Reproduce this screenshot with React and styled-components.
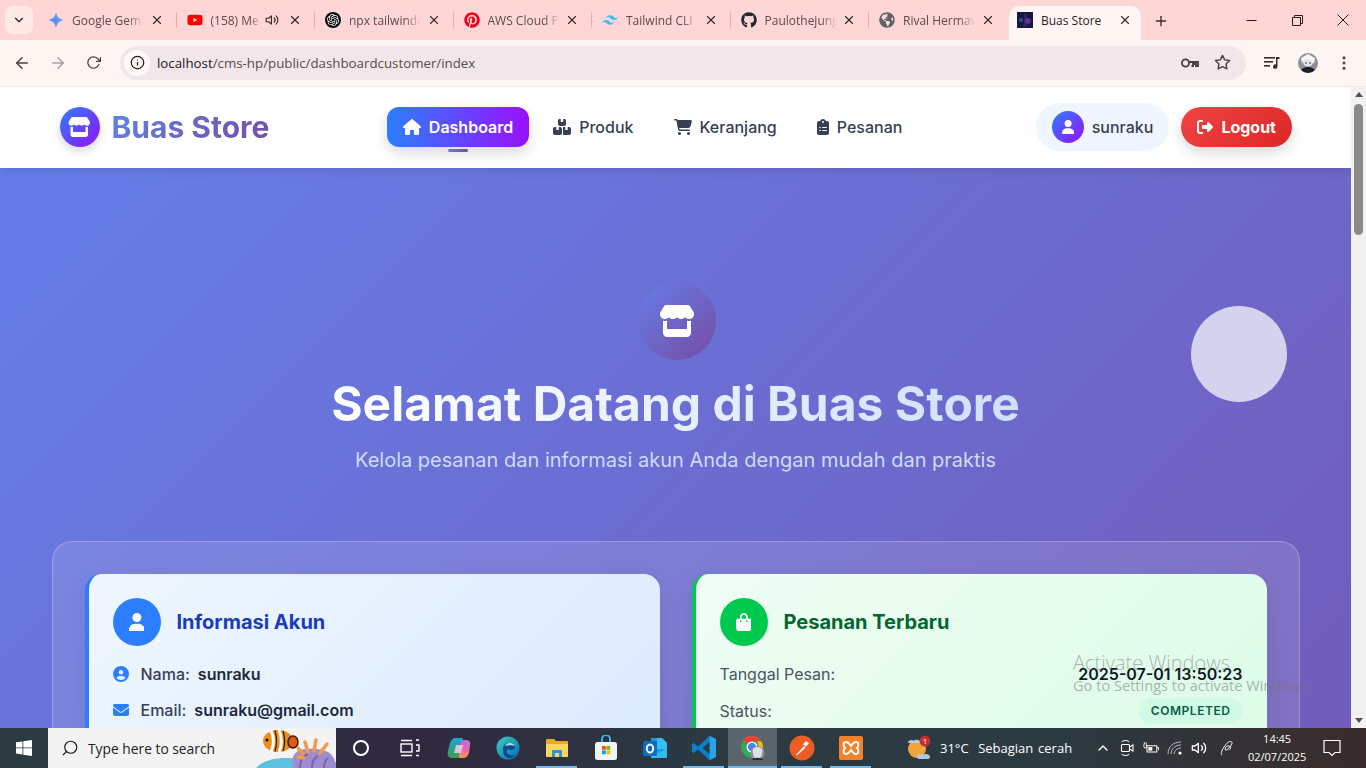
import React from "react";
import styled, { createGlobalStyle } from "styled-components";
import { FaPinterest, FaGithub, FaYoutube, FaGlobeAmericas } from "react-icons/fa";
import {
  FaStore, FaHouse, FaBoxesStacked, FaCartShopping, FaClipboardList, FaUser, FaRightFromBracket,
  FaCircleUser, FaEnvelope, FaBagShopping,
} from "react-icons/fa6";
import { SiOpenai, SiTailwindcss } from "react-icons/si";
import { FiArrowLeft, FiArrowRight, FiRotateCw, FiStar, FiX, FiPlus, FiChevronDown, FiMoreVertical, FiInfo, FiVolume2, FiChevronUp, FiSearch } from "react-icons/fi";

const Global = createGlobalStyle`
  html, body { margin: 0; padding: 0; width: 1366px; height: 768px; overflow: hidden; background: #fff; }
  * { box-sizing: border-box; }
`;

const Screen = styled.div`
  position: relative; width: 1366px; height: 768px; display: flex; flex-direction: column; overflow: hidden;
  font-family: Inter, "Liberation Sans", sans-serif;
`;

/* sizes a Font Awesome glyph to its true aspect ratio */
const Glyph = styled.span`
  display: flex; flex: none;
  svg { width: ${(p) => p.$w}px; height: ${(p) => p.$h || 16}px; }
`;

/* ---------- browser chrome ---------- */
const TabBar = styled.div`
  height: 40px; flex: none; background: #ffd6d6; display: flex; align-items: flex-end; padding-left: 5px;
  font-family: "Open Sans", "Noto Sans", sans-serif; font-size: 12px; color: #554141;
`;
const TabMenu = styled.div`
  width: 28px; height: 28px; margin: 0 5px 6px 0; border-radius: 8px; background: #ffe9e7; display: flex;
  align-items: center; justify-content: center; color: #2a1c1c; font-size: 14px;
`;
const Tab = styled.div`
  position: relative; width: ${(p) => (p.$active ? "132px" : "138.5px")}; height: ${(p) => (p.$active ? "34px" : "40px")};
  margin-left: ${(p) => (p.$active ? "1.5px" : "0")}; padding: ${(p) => (p.$active ? "0 0 6px 8px" : "0 0 0 10px")};
  display: flex; align-items: center; gap: 8px; flex: none; border-radius: 10px 10px 0 0;
  background: ${(p) => (p.$active ? "#fff5f3" : "transparent")}; color: ${(p) => (p.$active ? "#2b1c1c" : "#5e4a4a")};
  &::after {
    content: ""; display: ${(p) => (p.$sep ? "block" : "none")}; position: absolute; right: 0; top: 12px; width: 1px; height: 16px; background: #f7a9a9;
  }
`;
const Fav = styled.span`width: 16px; height: 16px; flex: none; display: flex; align-items: center; justify-content: center; font-size: 16px; color: ${(p) => p.$c || "#444"};`;
const OpenAiFav = styled.span`width: 16px; height: 16px; border-radius: 50%; background: #0b0b0b; color: #fff; display: flex; align-items: center; justify-content: center; font-size: 12px;`;
const TabTitle = styled.span`
  flex: none; width: ${(p) => p.$w || 72}px; overflow: hidden; white-space: nowrap;
  -webkit-mask-image: ${(p) => (p.$plain ? "none" : "linear-gradient(90deg, #000 78%, transparent)")};
  mask-image: ${(p) => (p.$plain ? "none" : "linear-gradient(90deg, #000 78%, transparent)")};
`;
const TabClose = styled.span`position: absolute; right: ${(p) => (p.$active ? "9px" : "13px")}; top: ${(p) => (p.$active ? "14px" : "20px")}; transform: translateY(-50%); display: flex; font-size: 14px; color: #3a2a2a;`;
const Speaker = styled.span`position: absolute; right: 36px; top: 50%; transform: translateY(-50%); display: flex; font-size: 14px; color: #3a2a2a;`;
const NewTab = styled.span`margin: 0 0 11px 12px; display: flex; font-size: 16px; color: #3a2a2a;`;
const WinControls = styled.div`margin-left: auto; display: flex; height: 40px;`;
const WinBtn = styled.span`width: 46px; height: 40px; display: flex; align-items: center; justify-content: center; color: #2a1c1c;`;

const Toolbar = styled.div`
  height: 47px; flex: none; background: #fff5f3; border-bottom: 1px solid #fbe4e2; display: flex; align-items: center;
  padding: 0 0 1px 4px; color: #4f3d3d; font-family: "Open Sans", "Noto Sans", sans-serif;
`;
const ToolBtn = styled.span`
  width: 36px; height: 34px; flex: none; display: flex; align-items: center; justify-content: center; font-size: 18px;
  color: ${(p) => (p.$off ? "#ab9c9c" : "#4f3d3d")};
`;
const ReloadGlyph = styled(FiRotateCw)`font-size: 15px; margin-left: -1px;`;
const Address = styled.div`
  width: 1126px; height: 34px; margin-left: 8px; flex: none; border-radius: 17px; background: #f1e6e9; display: flex; align-items: center; padding: 0 15px 0 4px;
`;
const InfoBubble = styled.span`width: 26px; height: 26px; border-radius: 50%; background: #fff8f7; display: flex; align-items: center; justify-content: center; font-size: 15px; color: #2b1c1c;`;
const Url = styled.span`margin-left: 7px; font-size: 13.3px; color: #5b4b4e; white-space: nowrap; b { font-weight: 400; color: #22181a; }`;
const AddrEnd = styled.span`margin-left: auto; display: flex; align-items: center; gap: 14px; font-size: 17px; color: #4f3d3d;`;
const ToolEnd = styled.div`margin-left: 8px; display: flex; align-items: center;`;

/* ---------- page ---------- */
const Viewport = styled.div`flex: 1; min-height: 0; display: flex; overflow: hidden;`;
const Page = styled.div`flex: 1; min-width: 0; display: flex; flex-direction: column; overflow: hidden;`;
const Nav = styled.nav`
  position: relative; z-index: 2; height: 81px; flex: none; background: #fff; box-shadow: 0 2px 10px rgba(0,0,0,.12);
`;
const NavInner = styled.div`max-width: 1280px; height: 80px; margin: 0 auto; padding: 0 23.5px 0 24px; display: flex; align-items: center; justify-content: space-between;`;
const Brand = styled.div`display: flex; align-items: center; gap: 12px;`;
const BrandIcon = styled.span`
  width: 40px; height: 40px; border-radius: 50%; background: linear-gradient(135deg, #2b7fff, #9810fa); display: flex; align-items: center; justify-content: center;
  color: #fff; box-shadow: 0 4px 10px rgba(0,0,0,.16);
`;
const BrandText = styled.span`
  font-size: 30px; font-weight: 700; line-height: 36px;
  background: linear-gradient(135deg, #5f85e8, #764ba2); -webkit-background-clip: text; background-clip: text; color: transparent;
`;
const NavLinks = styled.div`display: flex; gap: 8px;`;
const NavLink = styled.a`
  position: relative; height: 40px; padding: 0 16px; display: flex; align-items: center; gap: 8px; border-radius: 12px; font-size: 16px; font-weight: ${(p) => (p.$active ? 600 : 500)};
  color: ${(p) => (p.$active ? "#fff" : "#364153")};
  background: ${(p) => (p.$active ? "linear-gradient(90deg, #2b7fff, #9810fa)" : "transparent")};
  box-shadow: ${(p) => (p.$active ? "0 6px 14px rgba(0,0,0,.14)" : "none")};
  ${(p) => p.$active && `&::after { content: ""; position: absolute; left: 50%; bottom: -5px; width: 20px; height: 3px; margin-left: -10px; border-radius: 2px; background: linear-gradient(90deg, #667eea, #764ba2); }`}
`;
const NavRight = styled.div`display: flex; align-items: center; gap: 12px;`;
const UserPill = styled.div`height: 48px; padding: 0 16px; border-radius: 24px; background: #eff6ff; display: flex; align-items: center; gap: 8px; font-size: 16px; font-weight: 500; color: #364153;`;
const Avatar = styled.span`width: 32px; height: 32px; border-radius: 50%; background: linear-gradient(135deg, #2b7fff, #9810fa); color: #fff; display: flex; align-items: center; justify-content: center;`;
const LogoutBtn = styled.button`
  height: 40px; padding: 0 16px; border: 0; border-radius: 20px; background: linear-gradient(135deg, #ef4444, #dc2626); color: #fff; font: 700 16px Inter, sans-serif; display: flex; align-items: center; gap: 8px;
  box-shadow: 0 6px 14px rgba(0,0,0,.14);
`;

const Hero = styled.main`
  position: relative; flex: 1; min-height: 0; overflow: hidden; background: linear-gradient(135deg, #667eea 0%, #764ba2 150%);
  display: flex; flex-direction: column; align-items: center; padding-top: 114px;
`;
const Bubble = styled.div`position: absolute; left: 1191px; top: 138px; width: 96px; height: 96px; border-radius: 50%; background: #d4d3ee;`;
const HeroIcon = styled.div`
  width: 78px; height: 78px; flex: none; border-radius: 50%; background: linear-gradient(135deg, #667eea, #764ba2); color: #fff; display: flex; align-items: center; justify-content: center; margin-left: 3px;
`;
const HeroTitle = styled.h1`
  margin: 14px 0 0; flex: none; font-size: 48px; line-height: 60px; font-weight: 700; letter-spacing: 0;
  background: linear-gradient(90deg, #ffffff, #cfe0fe); -webkit-background-clip: text; background-clip: text; color: transparent;
`;
const HeroSub = styled.p`margin: 12px 0 0; flex: none; font-size: 20px; line-height: 28px; color: #cfdbfb;`;
const Panel = styled.section`
  width: 1248px; flex: none; margin-top: 67px; padding: 32px; border: 1px solid rgba(255,255,255,.22); border-radius: 20px; background: rgba(255,255,255,.12);
  display: grid; grid-template-columns: 1fr 1fr; gap: 32px;
`;
const Card = styled.article`
  border-left: 4px solid ${(p) => p.$c}; border-radius: 16px; padding: 24px; background: ${(p) => p.$bg};
  box-shadow: 0 8px 24px rgba(0,0,0,.08);
`;
const CardHead = styled.div`display: flex; align-items: center; gap: 16px; margin-bottom: 16px;`;
const CardIcon = styled.span`width: 48px; height: 48px; border-radius: 50%; background: ${(p) => p.$c}; color: #fff; display: flex; align-items: center; justify-content: center;`;
const CardTitle = styled.h2`margin: 0; font-size: 20px; line-height: 28px; font-weight: 700; color: ${(p) => p.$c};`;
const Rows = styled.div`display: flex; flex-direction: column; gap: 12px;`;
const InfoRow = styled.div`display: flex; align-items: center; height: 24px; font-size: 16px; svg { color: #2b7fff; font-size: 16px; margin-right: 12px; }`;
const Label = styled.span`color: #364153; font-weight: 500; margin-right: 8px;`;
const Value = styled.span`font-weight: 600; color: ${(p) => p.$c || "#1e2939"};`;
const SplitRow = styled.div`display: flex; align-items: center; justify-content: space-between; font-size: 16px; line-height: 24px;`;
const Muted = styled.span`color: #4a5565;`;
const Badge = styled.span`height: 26px; padding: 0 12px; border-radius: 13px; background: #d1fae5; color: #065f46; font-size: 12px; font-weight: 600; letter-spacing: .55px; display: flex; align-items: center;`;

const Scrollbar = styled.div`width: 15px; flex: none; background: #f1f1f1; position: relative; display: flex; flex-direction: column; align-items: center; justify-content: space-between; padding: 5px 0 5px;`;
const Thumb = styled.div`position: absolute; left: 3px; top: 17px; width: 9px; height: 131px; border-radius: 5px; background: #8a8a8a;`;
const Arrow = styled.span`width: 0; height: 0; border-left: 4.5px solid transparent; border-right: 4.5px solid transparent; ${(p) => (p.$down ? "border-top: 5px solid #505050;" : "border-bottom: 5px solid #505050;")}`;

const Activate = styled.div`
  position: absolute; left: 1073px; top: 650px; color: rgba(115,115,115,.55); font-family: "Open Sans", "Noto Sans", sans-serif; pointer-events: none; white-space: nowrap;
`;
const ActivateMain = styled.div`font-size: 20px; line-height: 25px; font-weight: 300;`;
const ActivateSub = styled.div`font-size: 14.6px; line-height: 20px; font-weight: 400;`;

/* ---------- taskbar ---------- */
const Taskbar = styled.footer`
  height: 40px; flex: none; display: flex; align-items: stretch; color: #fff; font-family: "Open Sans", "Noto Sans", sans-serif;
  background: linear-gradient(90deg, #2a3b42 0%, #2c3a42 3%, #31283f 30%, #2b3a42 52%, #2c3a41 78%, #3a2b2c 100%);
`;
const StartBtn = styled.div`width: 48px; flex: none; display: flex; align-items: center; justify-content: center;`;
const SearchBox = styled.div`
  position: relative; width: 288px; flex: none; background: #f3f3f3; display: flex; align-items: center; padding-left: 13px; gap: 9px; color: #222; font-size: 13.8px; overflow: hidden;
  svg.lens { font-size: 18px; transform: scaleX(-1); stroke-width: 1.6; }
`;
const SearchArt = styled.svg`position: absolute; right: 0; top: 0;`;
const TaskItem = styled.div`
  position: relative; width: 49px; flex: none; display: flex; align-items: center; justify-content: center;
  background: ${(p) => (p.$on ? "rgba(255,255,255,.22)" : "transparent")};
  ${(p) => p.$run && `&::after { content: ""; position: absolute; left: ${p.$on ? 0 : 4}px; right: ${p.$on ? 0 : 4}px; bottom: 0; height: 2px; background: #76b9ed; }`}
`;
const Weather = styled.div`margin-left: 32px; display: flex; align-items: center; gap: 7px; font-size: 13px; white-space: nowrap; word-spacing: 1.4px;`;
const Tray = styled.div`margin-left: 23px; display: flex; align-items: center; gap: 8px; font-size: 16px;`;
const TrayIcon = styled.span`width: 16px; display: flex; justify-content: center; margin-left: ${(p) => p.$gap || 0}px;`;
const Clock = styled.div`margin-left: 7px; width: 70px; text-align: center; font-size: 11px; line-height: 18px; display: flex; flex-direction: column; justify-content: center;`;
const Notify = styled.div`width: 40px; display: flex; align-items: center; justify-content: center;`;

const GeminiIcon = () => (
  <svg width="16" height="16" viewBox="0 0 16 16"><defs><linearGradient id="gm" x1="0" y1="1" x2="1" y2="0"><stop offset="0" stopColor="#3f7df0" /><stop offset="1" stopColor="#7aa7f7" /></linearGradient></defs><path d="M8 0c.6 4.4 3.2 7.3 8 8-4.8.7-7.4 3.6-8 8-.6-4.4-3.2-7.3-8-8 4.8-.7 7.4-3.6 8-8z" fill="url(#gm)" /></svg>
);
const StoreFav = () => (
  <svg width="16" height="16" viewBox="0 0 16 16"><rect width="16" height="16" fill="#141a3c" /><path d="M7 2h3l1 7-1 6H6l1-6z" fill="#262a60" /><circle cx="11" cy="9" r="3" fill="#7c2da8" opacity=".8" /><circle cx="4" cy="8" r="2" fill="#2c4fa8" /></svg>
);
const KeyIcon = () => (
  <svg width="20" height="14" viewBox="0 0 20 14" fill="none" stroke="#4f3d3d" strokeWidth="1.8"><circle cx="5.5" cy="7" r="3.6" /><path d="M9 6h9v4h-2V8h-3v2h-1.500" /></svg>
);
const MediaIcon = () => (
  <svg width="16" height="14" viewBox="0 0 16 14" fill="#3a2a2a"><rect x="0" y="1" width="11" height="1.600" /><rect x="0" y="5" width="9" height="1.600" /><rect x="0" y="9" width="6" height="1.600" /><path d="M12 1h3.500v2H13.500v7.500a2.200 2.200 0 1 1-1.500-2z" /></svg>
);
const ProfilePic = () => (
  <svg width="20" height="20" viewBox="0 0 20 20" style={{ borderRadius: "50%" }}><rect width="20" height="20" fill="#8d8e98" /><circle cx="10" cy="8" r="5.500" fill="#e4e2e6" /><path d="M2 20c1-8 15-8 16 0z" fill="#1e1e28" /><path d="M4 11c0-6 9-7 12 0l1-6-7-4-7 4z" fill="#f6f5f8" /><circle cx="8" cy="10" r=".8" fill="#334" /><circle cx="12" cy="10" r=".8" fill="#334" /></svg>
);
const WinLogo = () => (
  <svg width="16" height="16" viewBox="0 0 16 16" fill="#fff"><path d="M0 2.300 6.500 1.400V7.500H0zM7.300 1.300 16 0v7.500H7.300zM0 8.300h6.500v6.200L0 13.600zM7.300 8.300H16V16l-8.700-1.200z" /></svg>
);
const FishArt = () => (
  <SearchArt width="80" height="40" viewBox="0 0 80 40">
    <path d="M0 40c8-9 24-12 44-9l36 3v6z" fill="#5dc0dc" />
    <g transform="translate(4 1)">
      <ellipse cx="18" cy="12" rx="15" ry="11" fill="#f08a18" />
      <path d="M11 2c3 6 3 14 0 21M19 1c3 7 3 16 0 22" stroke="#fff" strokeWidth="3" fill="none" />
      <path d="M15 1.500c2 7 2 14 0 21M23 2c2 6 2 14 0 20" stroke="#222" strokeWidth="1.200" fill="none" />
      <ellipse cx="33" cy="13" rx="5" ry="6" fill="#d95c10" stroke="#3b1c08" strokeWidth="1.500" />
      <circle cx="7" cy="11" r="1.500" fill="#111" />
    </g>
    <path d="M38 40c-3-7-2-13 4-17 6-3 22-3 30 1 6 4 8 10 8 16z" fill="#9f8bd0" />
    <path d="M44 40c0-7 3-12 8-14M56 40c0-6 2-10 6-12M68 40c0-5 1-8 4-10" stroke="#7c63ad" strokeWidth="2" fill="none" />
    <path d="M47 26l-5-6M52 24l-3-10M58 23l2-11M64 25l7-9M48 30l-6-1" stroke="#f2994a" strokeWidth="3.500" strokeLinecap="round" />
  </SearchArt>
);
const CortanaIcon = () => (<svg width="18" height="18" viewBox="0 0 18 18"><circle cx="9" cy="9" r="7" fill="none" stroke="#fff" strokeWidth="2" /></svg>);
const TaskView = () => (<svg width="20" height="18" viewBox="0 0 20 18" fill="none" stroke="#fff" strokeWidth="1.400"><rect x="1" y="5" width="11" height="8" /><path d="M1 1.500h11M1 16.500h11M16 1h3M16 6h3v6h-3M16 16.500h3" /></svg>);
const CopilotIcon = () => (
  <svg width="24" height="24" viewBox="0 0 24 24"><defs><linearGradient id="cpa" x1="0" y1="0" x2="0" y2="1"><stop offset="0" stopColor="#1fa2d8" /><stop offset="1" stopColor="#3f9a50" /></linearGradient><linearGradient id="cpb" x1="0" y1="0" x2="0" y2="1"><stop offset="0" stopColor="#b46be0" /><stop offset=".6" stopColor="#ee6aa8" /><stop offset="1" stopColor="#f2a03a" /></linearGradient></defs><path d="M8 2h8l-4 20H5c-4 0-5-3-4-7l2-8c1-3 3-5 5-5z" fill="url(#cpa)" /><path d="M12 22h4c3 0 5-2 6-5l1-8c1-3-1-5-4-5h-4l-3 10z" fill="url(#cpb)" /><path d="M9 9h7l-2 8H7z" fill="#f3d6ee" opacity=".8" /></svg>
);
const EdgeIcon = () => (
  <svg width="24" height="24" viewBox="0 0 24 24"><defs><linearGradient id="ed" x1="0" y1="0" x2="1" y2="1"><stop offset="0" stopColor="#3bd1c0" /><stop offset="1" stopColor="#0c63b6" /></linearGradient></defs><circle cx="12" cy="12" r="11.500" fill="url(#ed)" /><path d="M7 13c0-4 3-6 7-6 3 0 5 2 5 4 0 2-2 3-5 3-1 0-1-1-1-1-2 0-3 2-2 4 1 2 4 3 8 2-2 3-6 4-9 2-2-1-3-4-3-8z" fill="#0a3f86" opacity=".9" /><path d="M9 10c1-2 3-3 5-3 2 0 4 1 5 3-2-1-6-1-10 0z" fill="#9ff0c8" /></svg>
);
const ExplorerIcon = () => (
  <svg width="24" height="22" viewBox="0 0 24 22"><path d="M1 3a1 1 0 0 1 1-1h7l2 2h11a1 1 0 0 1 1 1v14a1 1 0 0 1-1 1H2a1 1 0 0 1-1-1z" fill="#e9a825" /><path d="M1 7h22v12a1 1 0 0 1-1 1H2a1 1 0 0 1-1-1z" fill="#fbd561" /><path d="M7 20v-6a1 1 0 0 1 1-1h8a1 1 0 0 1 1 1v6h-3v-4h-4v4z" fill="#2a94dc" /></svg>
);
const StoreIcon = () => (
  <svg width="24" height="26" viewBox="0 0 24 26"><path d="M8 8V4a4 4 0 0 1 8 0v4" fill="none" stroke="#36b3f0" strokeWidth="2" /><rect x="1" y="7" width="22" height="18" rx="2.500" fill="#f4f4f4" /><rect x="8" y="11" width="3.800" height="3.800" fill="#f25022" /><rect x="12.400" y="11" width="3.800" height="3.800" fill="#7fba00" /><rect x="8" y="15.400" width="3.800" height="3.800" fill="#00a4ef" /><rect x="12.400" y="15.400" width="3.800" height="3.800" fill="#ffb900" /></svg>
);
const OutlookIcon = () => (
  <svg width="26" height="26" viewBox="0 0 26 26"><path d="M9 3h11l5 5v12a2 2 0 0 1-2 2H9z" fill="#1c9ad6" /><path d="M15 3h5l5 5v6h-10z" fill="#35c1ef" /><path d="M9 13l8 5 8-5v9a1 1 0 0 1-1 1H9z" fill="#2fbce8" /><rect x="1" y="6" width="14" height="15" rx="1.500" fill="#0f6cbd" /><ellipse cx="8" cy="13.500" rx="3.200" ry="4" fill="none" stroke="#fff" strokeWidth="1.800" /></svg>
);
const VsCodeIcon = () => (
  <svg width="26" height="26" viewBox="0 0 26 26"><path d="M18.500 1 25 4v18l-6.500 3L7 14.500 2.500 18 1 17V9l1.500-1L7 11.500z" fill="#0a7fcc" /><path d="M18.500 1 25 4v18l-6.500 3z" fill="#28a4ea" /><path d="M18.500 7l-7 6 7 6z" fill="#2c3a42" /></svg>
);
const ChromeIcon = () => (
  <svg width="26" height="26" viewBox="0 0 26 26"><circle cx="12" cy="12" r="11" fill="#34a853" /><path d="M12 1a11 11 0 0 1 9.500 5.500H12a5.500 5.500 0 0 0-5 3L3 4.500A11 11 0 0 1 12 1z" fill="#ea4335" /><path d="M21.500 6.500A11 11 0 0 1 12 23l4.700-8.200a5.500 5.500 0 0 0 0-8.300z" fill="#fbbc05" /><circle cx="12" cy="12" r="5.500" fill="#fff" /><circle cx="12" cy="12" r="4.200" fill="#4285f4" /><circle cx="17.500" cy="18" r="7" fill="#8f8f98" /><path d="M12.500 15c2-4 8-4 10 0l-1 6c-2 3-7 3-8 0z" fill="#e0dfe4" /><path d="M11.500 25c1-3 10-3 12 0z" fill="#2c2c36" /></svg>
);
const PostmanIcon = () => (
  <svg width="26" height="26" viewBox="0 0 26 26"><circle cx="13" cy="13" r="12.500" fill="#ef5b25" /><path d="M7 20l8-9 1.500 1.500-8.500 8z" fill="#fff" /><path d="M14 9.500l3-3.500 3 2-3 3.500z" fill="#fff" /></svg>
);
const XamppIcon = () => (
  <svg width="26" height="26" viewBox="0 0 26 26"><rect x="1" y="1" width="24" height="24" rx="2" fill="#f4812a" /><path d="M8 7c2 0 3 1 5 4 2-3 3-4 5-4 3 0 3 4 1 6 2 2 2 6-1 6-2 0-3-1-5-4-2 3-3 4-5 4-3 0-3-4-1-6-2-2-2-6 1-6z" fill="none" stroke="#fff" strokeWidth="2" /></svg>
);
const WeatherIcon = () => (
  <svg width="26" height="26" viewBox="0 0 26 26"><circle cx="10" cy="14" r="9" fill="#f2a33a" /><path d="M1 8c0-3 4-4 6-2 1-2 6-2 6 2z" fill="#b6cde4" /><path d="M10 22c0-3 4-4 6-2 2-2 7-1 7 2 0 1-1 2-2 2H12c-1 0-2-1-2-2z" fill="#a9c8e8" /><circle cx="18" cy="6" r="5.500" fill="#c62f2f" /><text x="18" y="9" fontSize="8" textAnchor="middle" fill="#fff" fontFamily="Open Sans, sans-serif">1</text></svg>
);
const MeetIcon = () => (<svg width="16" height="18" viewBox="0 0 16 18" fill="none" stroke="#fff" strokeWidth="1.100"><rect x="2.500" y="5.500" width="8" height="7" rx="1" /><path d="M10.500 8l3.500-2v6l-3.500-2M3 3c1-2 6-2 7 0M3 15c1 2 6 2 7 0" /></svg>);
const BatteryIcon = () => (<svg width="18" height="16" viewBox="0 0 18 16" fill="none" stroke="#fff" strokeWidth="1.100"><rect x="4.500" y="5.500" width="11" height="7" /><rect x="6" y="7" width="4.500" height="4" fill="#fff" stroke="none" /><path d="M15.500 7.500h2v3M1 4v2.500a1.500 1.500 0 0 0 3 0V4M1.500 1.500V4M3.500 1.500V4" /></svg>);
const WifiIcon = () => (<svg width="16" height="16" viewBox="0 0 16 16" fill="none" stroke="#b9c0c4" strokeWidth="1"><path d="M1 14C1 7 6 2 14 2M4 14c0-5 4-9 10-9M7 14c0-3 3-6 7-6" /><circle cx="13" cy="13" r="1.600" fill="#fff" stroke="none" /></svg>);
const PenIcon = () => (<svg width="18" height="20" viewBox="0 0 18 20" fill="none" stroke="#fff" strokeWidth="1.100"><path d="M3 18c-1-2 0-6 4-11 2-3 5-5 7-4 2 2-1 5-4 8-2 2-3 2-3 0 0-3 3-4 5-3 2 1 1 4-1 4" /></svg>);
const NotifyIcon = () => (<svg width="20" height="20" viewBox="0 0 20 20" fill="none" stroke="#fff" strokeWidth="1.200"><path d="M2 2.500h16v12h-5l-3 3-3-3H2z" /></svg>);

const tabs = [
  { icon: <GeminiIcon />, title: "Google Gemini" },
  { icon: <FaYoutube />, c: "#f00", title: "(158) Me", w: 50, speaker: true },
  { icon: <OpenAiFav><SiOpenai /></OpenAiFav>, title: "npx tailwindcss" },
  { icon: <FaPinterest />, c: "#e60023", title: "AWS Cloud Pra" },
  { icon: <SiTailwindcss />, c: "#38bdf8", title: "Tailwind CLI - " },
  { icon: <FaGithub />, c: "#24292f", title: "Paulothejungle" },
  { icon: <FaGlobeAmericas />, c: "#5f6368", title: "Rival Hermawan" },
];

export default function App() {
  return (
    <Screen>
      <Global />
      <TabBar>
        <TabMenu><FiChevronDown /></TabMenu>
        {tabs.map((t, i) => (
          <Tab key={t.title} $sep={i < 6}>
            <Fav $c={t.c}>{t.icon}</Fav>
            <TabTitle $w={t.w}>{t.title}</TabTitle>
            {t.speaker && <Speaker><FiVolume2 /></Speaker>}
            <TabClose><FiX /></TabClose>
          </Tab>
        ))}
        <Tab $active>
          <Fav><StoreFav /></Fav>
          <TabTitle $plain>Buas Store</TabTitle>
          <TabClose $active><FiX /></TabClose>
        </Tab>
        <NewTab><FiPlus /></NewTab>
        <WinControls>
          <WinBtn><svg width="11" height="11" viewBox="0 0 11 11" stroke="#2a1c1c"><path d="M0.500 5.500h10" /></svg></WinBtn>
          <WinBtn><svg width="11" height="11" viewBox="0 0 11 11" fill="none" stroke="#2a1c1c"><path d="M0.500 2.500h8v8h-8zM2.500 2.500v-2h8v8h-2" /></svg></WinBtn>
          <WinBtn><svg width="12" height="12" viewBox="0 0 12 12" stroke="#2a1c1c"><path d="M0.500 0.500l11 11M11.500 0.500l-11 11" /></svg></WinBtn>
        </WinControls>
      </TabBar>
      <Toolbar>
        <ToolBtn><FiArrowLeft /></ToolBtn>
        <ToolBtn $off><FiArrowRight /></ToolBtn>
        <ToolBtn><ReloadGlyph /></ToolBtn>
        <Address>
          <InfoBubble><FiInfo /></InfoBubble>
          <Url><b>localhost</b>/cms-hp/public/dashboardcustomer/index</Url>
          <AddrEnd><KeyIcon /><FiStar /></AddrEnd>
        </Address>
        <ToolEnd>
          <ToolBtn><MediaIcon /></ToolBtn>
          <ToolBtn><ProfilePic /></ToolBtn>
          <ToolBtn><FiMoreVertical /></ToolBtn>
        </ToolEnd>
      </Toolbar>
      <Viewport>
        <Page>
          <Nav>
            <NavInner>
              <Brand>
                <BrandIcon><Glyph $w={22.5} $h={20}><FaStore /></Glyph></BrandIcon>
                <BrandText>Buas Store</BrandText>
              </Brand>
              <NavLinks>
                <NavLink $active><Glyph $w={18}><FaHouse /></Glyph>Dashboard</NavLink>
                <NavLink><Glyph $w={18}><FaBoxesStacked /></Glyph>Produk</NavLink>
                <NavLink><Glyph $w={18}><FaCartShopping /></Glyph>Keranjang</NavLink>
                <NavLink><Glyph $w={12}><FaClipboardList /></Glyph>Pesanan</NavLink>
              </NavLinks>
              <NavRight>
                <UserPill><Avatar><Glyph $w={12.25} $h={14}><FaUser /></Glyph></Avatar>sunraku</UserPill>
                <LogoutBtn><Glyph $w={16}><FaRightFromBracket /></Glyph>Logout</LogoutBtn>
              </NavRight>
            </NavInner>
          </Nav>
          <Hero>
            <Bubble />
            <HeroIcon><Glyph $w={36} $h={32}><FaStore /></Glyph></HeroIcon>
            <HeroTitle>Selamat Datang di Buas Store</HeroTitle>
            <HeroSub>Kelola pesanan dan informasi akun Anda dengan mudah dan praktis</HeroSub>
            <Panel>
              <Card $c="#2b7fff" $bg="linear-gradient(135deg, #eff6ff, #dbeafe)">
                <CardHead>
                  <CardIcon $c="#2b7fff"><Glyph $w={15.75} $h={18}><FaUser /></Glyph></CardIcon>
                  <CardTitle $c="#193cb8">Informasi Akun</CardTitle>
                </CardHead>
                <Rows>
                  <InfoRow><FaCircleUser /><Label>Nama:</Label><Value>sunraku</Value></InfoRow>
                  <InfoRow><FaEnvelope /><Label>Email:</Label><Value>sunraku@gmail.com</Value></InfoRow>
                </Rows>
              </Card>
              <Card $c="#00c950" $bg="linear-gradient(135deg, #f0fdf4, #dcfce7)">
                <CardHead>
                  <CardIcon $c="#00c950"><Glyph $w={15.75} $h={18}><FaBagShopping /></Glyph></CardIcon>
                  <CardTitle $c="#016630">Pesanan Terbaru</CardTitle>
                </CardHead>
                <Rows>
                  <SplitRow><Muted>Tanggal Pesan:</Muted><Value $c="#101828">2025-07-01 13:50:23</Value></SplitRow>
                  <SplitRow><Muted>Status:</Muted><Badge>COMPLETED</Badge></SplitRow>
                </Rows>
              </Card>
            </Panel>
          </Hero>
        </Page>
        <Scrollbar>
          <Arrow />
          <Thumb />
          <Arrow $down />
        </Scrollbar>
      </Viewport>
      <Taskbar>
        <StartBtn><WinLogo /></StartBtn>
        <SearchBox>
          <FiSearch className="lens" />
          <span>Type here to search</span>
          <FishArt />
        </SearchBox>
        <TaskItem><CortanaIcon /></TaskItem>
        <TaskItem><TaskView /></TaskItem>
        <TaskItem><CopilotIcon /></TaskItem>
        <TaskItem><EdgeIcon /></TaskItem>
        <TaskItem $run><ExplorerIcon /></TaskItem>
        <TaskItem><StoreIcon /></TaskItem>
        <TaskItem><OutlookIcon /></TaskItem>
        <TaskItem $run><VsCodeIcon /></TaskItem>
        <TaskItem $run $on><ChromeIcon /></TaskItem>
        <TaskItem $run><PostmanIcon /></TaskItem>
        <TaskItem $run><XamppIcon /></TaskItem>
        <Weather><WeatherIcon /><span>31°C&nbsp; Sebagian cerah</span></Weather>
        <Tray>
          <TrayIcon><FiChevronUp /></TrayIcon>
          <TrayIcon><MeetIcon /></TrayIcon>
          <TrayIcon><BatteryIcon /></TrayIcon>
          <TrayIcon><WifiIcon /></TrayIcon>
          <TrayIcon><FiVolume2 /></TrayIcon>
          <TrayIcon $gap={4}><PenIcon /></TrayIcon>
        </Tray>
        <Clock><span>14:45</span><span>02/07/2025</span></Clock>
        <Notify><NotifyIcon /></Notify>
      </Taskbar>
      <Activate>
        <ActivateMain>Activate Windows</ActivateMain>
        <ActivateSub>Go to Settings to activate Windows.</ActivateSub>
      </Activate>
    </Screen>
  );
}
